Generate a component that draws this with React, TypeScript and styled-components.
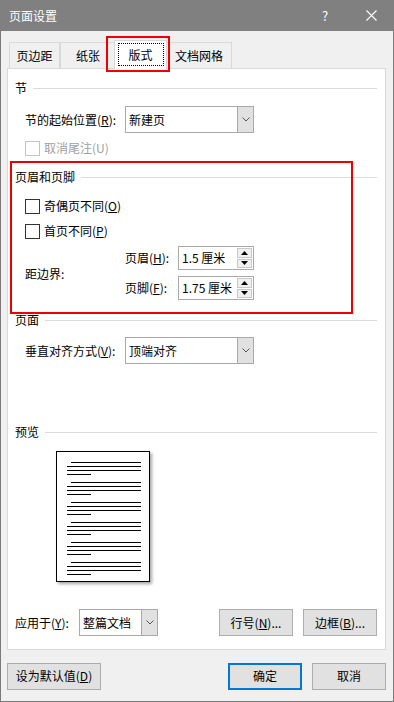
import React from "react";
import styled, { createGlobalStyle } from "styled-components";

const GlobalStyle = createGlobalStyle`
  html, body {
    margin: 0;
    padding: 0;
    background: #ffffff;
  }
  body {
    font-family: "Noto Sans CJK SC", "Microsoft YaHei", sans-serif;
    font-size: 12px;
    line-height: 16px;
    color: #000;
  }
  * {
    box-sizing: border-box;
  }
`;

const Window = styled.div`
  position: relative;
  width: 394px;
  height: 702px;
  display: flex;
  flex-direction: column;
  background: #f0f0f0;
`;

const TitleBar = styled.div`
  height: 31px;
  flex: none;
  display: flex;
  align-items: center;
  background: #808080;
  color: #fff;
`;

const Title = styled.div`
  flex: 1;
  padding-left: 9px;
`;

const TitleButton = styled.div`
  width: 46px;
  height: 31px;
  display: flex;
  align-items: center;
  justify-content: center;
  font-size: 13px;
`;

const Body = styled.div`
  flex: 1;
  display: flex;
  flex-direction: column;
  padding: 9px 7px 0 6px;
  border: 1px solid #7a7a7a;
  border-top: none;
`;

const TabStrip = styled.div`
  display: flex;
  align-items: flex-end;
  height: 29px;
  margin: 0 0 -1px 2px;
  position: relative;
  z-index: 1;
`;

const Tab = styled.div<{ $w: number; $active?: boolean }>`
  width: ${(p) => p.$w}px;
  height: ${(p) => (p.$active ? 29 : 26)}px;
  margin-bottom: ${(p) => (p.$active ? 0 : 1)}px;
  display: flex;
  align-items: center;
  justify-content: center;
  border: 1px solid #d9d9d9;
  border-bottom: none;
  margin-left: ${(p) => (p.$active ? -2 : 0)}px;
  margin-right: ${(p) => (p.$active ? -1 : 0)}px;
  background: ${(p) => (p.$active ? "#ffffff" : "#f0f0f0")};
  position: relative;
  z-index: ${(p) => (p.$active ? 2 : 1)};
  padding-bottom: ${(p) => (p.$active ? 3 : 0)}px;
`;

const Focus = styled.span`
  width: 46px;
  height: 23px;
  display: flex;
  align-items: center;
  justify-content: center;
  border: 1px dotted #000;
  margin-top: 2px;
`;

const Panel = styled.div`
  height: 582px;
  flex: none;
  display: flex;
  flex-direction: column;
  background: #ffffff;
  border: 1px solid #d9d9d9;
  padding: 11px 8px 13px 7px;
`;

const Legend = styled.div<{ $mt?: number }>`
  display: flex;
  align-items: center;
  height: 16px;
  margin-top: ${(p) => p.$mt || 0}px;
  &::after {
    content: "";
    flex: 1;
    height: 1px;
    margin-left: 6px;
    background: #dcdcdc;
  }
`;

const Row = styled.div<{ $mt?: number; $indent?: number }>`
  display: flex;
  align-items: center;
  margin-top: ${(p) => p.$mt || 0}px;
  margin-left: ${(p) => (p.$indent === undefined ? 10 : p.$indent)}px;
`;

const Label = styled.div<{ $w: number }>`
  width: ${(p) => p.$w}px;
  flex: none;
  white-space: nowrap;
`;

const Key = styled.span`
  text-decoration: underline;
  text-underline-offset: 1px;
`;

const Combo = styled.div<{ $w: number }>`
  width: ${(p) => p.$w}px;
  height: 27px;
  display: flex;
  border: 1px solid #a9a9a9;
  background: #fff;
`;

const ComboText = styled.div`
  flex: 1;
  display: flex;
  align-items: center;
  padding-left: 3px;
`;

const ComboButton = styled.div`
  width: 16px;
  display: flex;
  align-items: center;
  justify-content: center;
  background: #e1e1e1;
  border-left: 1px solid #a9a9a9;
`;

const Check = styled.div<{ $disabled?: boolean }>`
  display: flex;
  align-items: center;
  height: 16px;
  color: ${(p) => (p.$disabled ? "#a0a0a0" : "#000")};
  &::before {
    content: "";
    width: 13px;
    height: 13px;
    margin-right: 4px;
    border: 1px solid ${(p) => (p.$disabled ? "#c4c4c4" : "#333")};
    background: #fff;
  }
`;

const SpinGrid = styled.div`
  display: grid;
  grid-template-columns: 100px 53px 76px;
  grid-template-rows: 24px 24px;
  row-gap: 6px;
  margin: 7px 0 0 10px;
  align-items: center;
`;

const GridSpanLabel = styled.div`
  grid-row: 1 / 3;
  padding-top: 2px;
`;

const Spin = styled.div`
  height: 24px;
  display: flex;
  border: 1px solid #a9a9a9;
  background: #fff;
`;

const SpinText = styled.div`
  flex: 1;
  display: flex;
  align-items: center;
  padding-left: 3px;
  white-space: nowrap;
`;

const SpinButtons = styled.div`
  width: 16px;
  display: flex;
  flex-direction: column;
  padding: 1px 1px 1px 0;
  gap: 1px;
`;

const SpinBtn = styled.div`
  flex: 1;
  display: flex;
  align-items: center;
  justify-content: center;
  background: #f0f0f0;
  border: 1px solid #c8c8c8;
`;

const PreviewPage = styled.div`
  width: 94px;
  height: 131px;
  margin: 11px 0 0 41px;
  border: 1px solid #000;
  background: #fff;
  box-shadow: 2px 2px 3px rgba(0, 0, 0, 0.35);
`;

const BottomRow = styled.div`
  display: flex;
  align-items: center;
  margin-top: auto;
  gap: 10px;
`;

const Spacer = styled.div`
  flex: 1;
`;

const Button = styled.div<{ $w: number; $default?: boolean }>`
  width: ${(p) => p.$w}px;
  height: 27px;
  display: flex;
  align-items: center;
  justify-content: center;
  background: #e1e1e1;
  border: ${(p) => (p.$default ? "2px solid #0078d7" : "1px solid #adadad")};
  white-space: nowrap;
`;

const Footer = styled.div`
  display: flex;
  align-items: center;
  gap: 10px;
  margin-top: 12px;
  height: 28px;
`;

const Highlight = styled.div<{ $x: number; $y: number; $w: number; $h: number }>`
  position: absolute;
  left: ${(p) => p.$x}px;
  top: ${(p) => p.$y}px;
  width: ${(p) => p.$w}px;
  height: ${(p) => p.$h}px;
  border: 2px solid #ee0000;
  pointer-events: none;
  z-index: 5;
`;

const Chevron = () => (
  <svg width="8" height="5" viewBox="0 0 8 5">
    <path d="M0.5 0.5 L4 4 L7.5 0.5" fill="none" stroke="#555" strokeWidth="1" />
  </svg>
);

const Arrow = ({ up }: { up?: boolean }) => (
  <svg width="7" height="4" viewBox="0 0 7 4">
    <path d={up ? "M0 4 L3.5 0 L7 4 Z" : "M0 0 L3.5 4 L7 0 Z"} fill="#000" />
  </svg>
);

const CloseIcon = () => (
  <svg width="11" height="11" viewBox="0 0 11 11">
    <path d="M0.5 0.5 L10.5 10.5 M10.5 0.5 L0.5 10.5" stroke="#fff" strokeWidth="1.1" />
  </svg>
);

const PageLines = () => {
  const groups = [0, 1, 2, 3, 4, 5];
  return (
    <svg width="92" height="129" viewBox="0 0 92 129" shapeRendering="crispEdges">
      {groups.map((g) => {
        const y = 10 + g * 20;
        return (
          <g key={g} fill="#000">
            <rect x={14} y={y} width={70} height={1.4} />
            <rect x={10} y={y + 4} width={74} height={1.4} />
            <rect x={10} y={y + 8} width={74} height={1.4} />
            <rect x={10} y={y + 12} width={24} height={1.4} />
          </g>
        );
      })}
    </svg>
  );
};

const App: React.FC = () => {
  return (
    <>
      <GlobalStyle />
      <Window>
        <TitleBar>
          <Title>页面设置</Title>
          <TitleButton>?</TitleButton>
          <TitleButton>
            <CloseIcon />
          </TitleButton>
        </TitleBar>
        <Body>
          <TabStrip>
            <Tab $w={51}>页边距</Tab>
            <Tab $w={56}>纸张</Tab>
            <Tab $w={53} $active>
              <Focus>版式</Focus>
            </Tab>
            <Tab $w={66}>文档网格</Tab>
          </TabStrip>
          <Panel>
            <Legend>节</Legend>
            <Row $mt={10}>
              <Label $w={100}>
                节的起始位置(<Key>R</Key>):
              </Label>
              <Combo $w={129}>
                <ComboText>新建页</ComboText>
                <ComboButton>
                  <Chevron />
                </ComboButton>
              </Combo>
            </Row>
            <Row $mt={7}>
              <Check $disabled>取消尾注(U)</Check>
            </Row>

            <Legend $mt={13}>页眉和页脚</Legend>
            <Row $mt={13}>
              <Check>
                奇偶页不同(<Key>O</Key>)
              </Check>
            </Row>
            <Row $mt={9}>
              <Check>
                首页不同(<Key>P</Key>)
              </Check>
            </Row>
            <SpinGrid>
              <GridSpanLabel>距边界:</GridSpanLabel>
              <Label $w={53}>
                页眉(<Key>H</Key>):
              </Label>
              <Spin>
                <SpinText>1.5 厘米</SpinText>
                <SpinButtons>
                  <SpinBtn>
                    <Arrow up />
                  </SpinBtn>
                  <SpinBtn>
                    <Arrow />
                  </SpinBtn>
                </SpinButtons>
              </Spin>
              <Label $w={53}>
                页脚(<Key>F</Key>):
              </Label>
              <Spin>
                <SpinText>1.75 厘米</SpinText>
                <SpinButtons>
                  <SpinBtn>
                    <Arrow up />
                  </SpinBtn>
                  <SpinBtn>
                    <Arrow />
                  </SpinBtn>
                </SpinButtons>
              </Spin>
            </SpinGrid>

            <Legend $mt={12}>页面</Legend>
            <Row $mt={9}>
              <Label $w={100}>
                垂直对齐方式(<Key>V</Key>):
              </Label>
              <Combo $w={129}>
                <ComboText>顶端对齐</ComboText>
                <ComboButton>
                  <Chevron />
                </ComboButton>
              </Combo>
            </Row>

            <Legend $mt={60}>预览</Legend>
            <PreviewPage>
              <PageLines />
            </PreviewPage>

            <BottomRow>
              <Label $w={54}>
                应用于(<Key>Y</Key>):
              </Label>
              <Combo $w={79}>
                <ComboText>整篇文档</ComboText>
                <ComboButton>
                  <Chevron />
                </ComboButton>
              </Combo>
              <Spacer />
              <Button $w={74}>
                行号(<Key>N</Key>)...
              </Button>
              <Button $w={74}>
                边框(<Key>B</Key>)...
              </Button>
            </BottomRow>
          </Panel>
          <Footer>
            <Button $w={94}>
              设为默认值(<Key>D</Key>)
            </Button>
            <Spacer />
            <Button $w={74} $default>
              确定
            </Button>
            <Button $w={74}>取消</Button>
          </Footer>
        </Body>
        <Highlight $x={106} $y={36} $w={64} $h={36} />
        <Highlight $x={10} $y={161} $w={343} $h={153} />
      </Window>
    </>
  );
};

export default App;
